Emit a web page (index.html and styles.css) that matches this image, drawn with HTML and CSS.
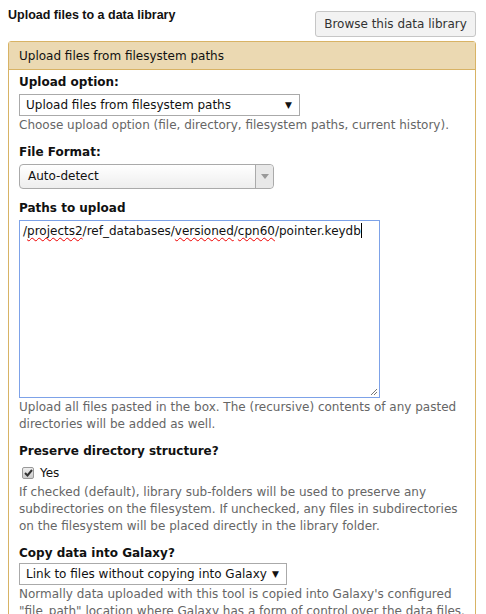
FILE: index.html
```html
<!DOCTYPE html>
<html>
<head>
<meta charset="utf-8">
<link rel="stylesheet" href="styles.css">
</head>
<body>
<div class="top">
  <h3 class="title">Upload files to a data library</h3>
  <button class="btn">Browse this data library</button>
</div>
<div class="panel">
  <div class="panel-head">Upload files from filesystem paths</div>
  <div class="panel-body">
    <div class="field">
      <div class="label">Upload option:</div>
      <div class="select plain w281"><span>Upload files from filesystem paths</span><span class="caret">&#9660;</span></div>
      <div class="help">Choose upload option (file, directory, filesystem paths, current history).</div>
    </div>
    <div class="field">
      <div class="label">File Format:</div>
      <div class="select2"><span class="s2-text">Auto-detect</span><span class="s2-arrow"><svg width="8" height="5" viewBox="0 0 8 5"><path d="M0 0h8L4 5z" fill="#999"/></svg></span></div>
    </div>
    <div class="field">
      <div class="label">Paths to upload</div>
      <div class="textarea"><span class="txt">/<span class="sp">projects2</span>/ref_databases/<span class="sp">versioned</span>/<span class="sp">cpn60</span>/pointer.keydb</span><span class="cursor"></span>
        <svg class="grip" width="8" height="8" viewBox="0 0 8 8"><path d="M7 1L1 7M7 4L4 7" stroke="#777" stroke-width="1"/></svg>
      </div>
      <div class="help">Upload all files pasted in the box. The (recursive) contents of any pasted directories will be added as well.</div>
    </div>
    <div class="field">
      <div class="label">Preserve directory structure?</div>
      <div class="check"><span class="box"><svg width="9" height="8" viewBox="0 0 9 8"><path d="M1 4l2.5 2.5L8 1" stroke="#333" stroke-width="2" fill="none"/></svg></span>Yes</div>
      <div class="help">If checked (default), library sub-folders will be used to preserve any subdirectories on the filesystem. If unchecked, any files in subdirectories on the filesystem will be placed directly in the library folder.</div>
    </div>
    <div class="field">
      <div class="label">Copy data into Galaxy?</div>
      <div class="select plain w268 tight"><span>Link to files without copying into Galaxy</span><span class="caret">&#9660;</span></div>
      <div class="help">Normally data uploaded with this tool is copied into Galaxy's configured "file_path" location where Galaxy has a form of control over the data files.</div>
    </div>
  </div>
</div>
</body>
</html>
```
FILE: styles.css
```css
* { box-sizing: border-box; }
body {
  margin: 0;
  padding: 0 10px 0 8px;
  font-family: "DejaVu Sans", Verdana, sans-serif;
  font-size: 12px;
  color: #111;
  background: #fff;
  overflow: hidden;
}
.top {
  display: flex;
  justify-content: space-between;
  align-items: flex-start;
  height: 41px;
}
.title {
  margin: 0;
  padding-top: 8px;
  font-family: "Liberation Sans", Arial, sans-serif;
  font-size: 12.5px;
  font-weight: bold;
}
.btn {
  margin-top: 11px;
  height: 26px;
  width: 161px;
  padding: 0;
  font: inherit;
  color: #333;
  background: #f2f2f2;
  border: 1px solid #c6c6c6;
  border-radius: 3px;
}
.panel {
  border: 1px solid #d8b365;
  border-radius: 3px 3px 0 0;
}
.panel-head {
  background: #ebd9b2;
  height: 28px;
  line-height: 28px;
  padding-left: 10px;
  border-bottom: 1px solid #d8b365;
}
.panel-body {
  padding: 2px 10px 0 10px;
}
.field { margin-bottom: 8px; }
.label {
  font-weight: bold;
  line-height: 20px;
  margin-bottom: 2px;
}
.select {
  display: flex;
  justify-content: space-between;
  align-items: center;
  height: 22px;
  border: 1px solid #aaa;
  padding: 0 7px 0 6px;
  background: #fff;
}
.tight { margin-top: -2px; }
.w281 { width: 281px; }
.w268 { width: 268px; }
.caret { font-size: 9px; }
.help {
  color: #666;
  line-height: 17px;
  margin-top: 1px;
}
.select2 {
  display: flex;
  width: 255px;
  height: 25px;
  border: 1px solid #aaa;
  border-radius: 4px;
  background: linear-gradient(#fff, #eee);
  margin-top: 1px;
  margin-bottom: 9px;
}
.s2-text {
  flex: 1;
  line-height: 23px;
  padding-left: 8px;
}
.s2-arrow {
  width: 18px;
  border-left: 1px solid #aaa;
  display: flex;
  align-items: center;
  justify-content: center;
  background: #e8e8e8;
  border-radius: 0 4px 4px 0;
}
.textarea {
  position: relative;
  width: 361px;
  height: 178px;
  border: 1px solid #7da2e8;
  padding: 2px 3px;
  line-height: 16px;
}
.sp {
  text-decoration: underline wavy #e00;
  text-decoration-thickness: 1px;
  text-underline-offset: 2px;
}
.cursor {
  display: inline-block;
  width: 1px;
  height: 15px;
  background: #000;
  vertical-align: -3px;
}
.grip { position: absolute; right: 1px; bottom: 1px; }
.check {
  display: flex;
  align-items: center;
  gap: 6px;
  line-height: 20px;
  padding-left: 3px;
}
.box {
  width: 12px;
  height: 12px;
  border: 1px solid #999;
  border-radius: 2px;
  background: linear-gradient(#eee, #ccc);
  display: flex;
  align-items: center;
  justify-content: center;
}
```
